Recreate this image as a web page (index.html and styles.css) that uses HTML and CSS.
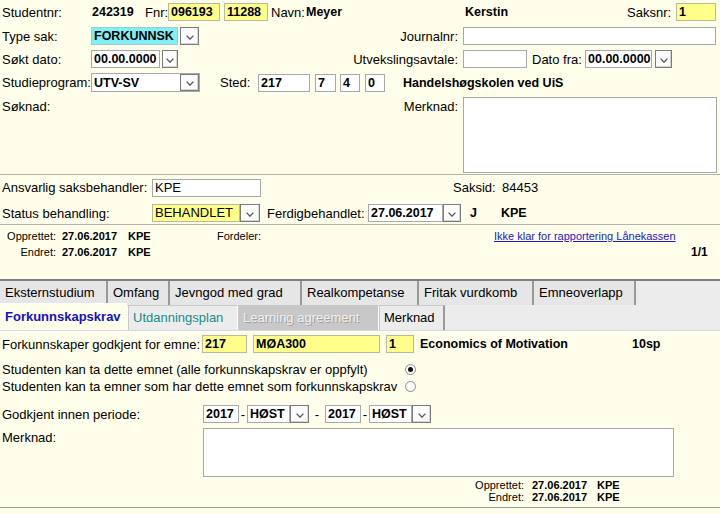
FILE: index.html
```html
<!DOCTYPE html>
<html lang="no">
<head>
<meta charset="utf-8">
<title>Søknad</title>
<link rel="stylesheet" href="styles.css">
</head>
<body>
<div class="page">
  <section class="head">
    <div class="row r1">
      <span class="lbl w92">Studentnr:</span>
      <span class="val w53">242319</span>
      <span class="lbl w23">Fnr:</span>
      <span class="fld yel w52">096193</span>
      <span class="fld yel w44 ml4">11288</span>
      <span class="lbl w35 ml3">Navn:</span>
      <span class="val w159">Meyer</span>
      <span class="val w162">Kerstin</span>
      <span class="lbl w49">Saksnr:</span>
      <span class="fld yel w40">1</span>
    </div>
    <div class="row r2">
      <span class="lbl w91">Type sak:</span>
      <span class="fld cyan w87">FORKUNNSK</span>
      <span class="btn b19 ml2"><svg width="8" height="5" viewBox="0 0 8 5"><polyline points="0.6,0.6 4,4.2 7.4,0.6"/></svg></span>
      <span class="lbl rlbl w264">Journalnr:</span>
      <span class="fld w253"></span>
    </div>
    <div class="row r3">
      <span class="lbl w91">Søkt dato:</span>
      <span class="fld w69">00.00.0000</span>
      <span class="btn b16 ml2"><svg width="8" height="5" viewBox="0 0 8 5"><polyline points="0.6,0.6 4,4.2 7.4,0.6"/></svg></span>
      <span class="lbl rlbl w285">Utvekslingsavtale:</span>
      <span class="fld w64"></span>
      <span class="lbl w53 ml5">Dato fra:</span>
      <span class="fld w67">00.00.0000</span>
      <span class="btn b17 ml3"><svg width="8" height="5" viewBox="0 0 8 5"><polyline points="0.6,0.6 4,4.2 7.4,0.6"/></svg></span>
    </div>
    <div class="row r4">
      <span class="lbl w91">Studieprogram:</span>
      <span class="combo w109">
        <span class="combo-text">UTV-SV</span>
        <span class="btn b19i"><svg width="8" height="5" viewBox="0 0 8 5"><polyline points="0.6,0.6 4,4.2 7.4,0.6"/></svg></span>
      </span>
      <span class="lbl w38 ml20">Sted:</span>
      <span class="fld w52">217</span>
      <span class="fld w21 ml5">7</span>
      <span class="fld w20 ml4">4</span>
      <span class="fld w20 ml5">0</span>
      <span class="val ml18">Handelshøgskolen ved UiS</span>
    </div>
    <div class="row r5">
      <span class="lbl top w403">Søknad:</span>
      <span class="lbl top rlbl w60">Merknad:</span>
      <span class="area w254"></span>
    </div>
  </section>

  <section class="case">
    <div class="row ra">
      <span class="lbl w152">Ansvarlig saksbehandler:</span>
      <span class="fld reg w109">KPE</span>
      <span class="lbl w49 ml192">Saksid:</span>
      <span class="val num">84453</span>
    </div>
    <div class="row rb">
      <span class="lbl w152">Status behandling:</span>
      <span class="fld yel reg w88">BEHANDLET</span>
      <span class="btn b20"><svg width="8" height="5" viewBox="0 0 8 5"><polyline points="0.6,0.6 4,4.2 7.4,0.6"/></svg></span>
      <span class="lbl w101 ml7">Ferdigbehandlet:</span>
      <span class="fld w75">27.06.2017</span>
      <span class="btn b18"><svg width="8" height="5" viewBox="0 0 8 5"><polyline points="0.6,0.6 4,4.2 7.4,0.6"/></svg></span>
      <span class="val w31 ml9">J</span>
      <span class="val">KPE</span>
    </div>
  </section>

  <section class="meta">
    <div class="mrow m1">
      <span class="mlbl w56">Opprettet:</span>
      <span class="mval w66 ml6">27.06.2017</span>
      <span class="mval w89">KPE</span>
      <span class="mtxt w277">Fordeler:</span>
      <a class="link" href="#">Ikke klar for rapportering Lånekassen</a>
    </div>
    <div class="mrow m2">
      <span class="mlbl w56">Endret:</span>
      <span class="mval w66 ml6">27.06.2017</span>
      <span class="mval w89">KPE</span>
      <span class="pager">1/1</span>
    </div>
  </section>

  <nav class="tabs">
    <div class="tabrow t1">
      <span class="tab w106 first">Eksternstudium</span>
      <span class="tab w62">Omfang</span>
      <span class="tab w132">Jevngod med grad</span>
      <span class="tab w117">Realkompetanse</span>
      <span class="tab w115">Fritak vurdkomb</span>
      <span class="tab w104 last">Emneoverlapp</span>
    </div>
    <div class="tabrow t2">
      <span class="tab2 active w127">Forkunnskapskrav</span>
      <span class="tab2 teal w110">Utdanningsplan</span>
      <span class="tab2 disabled w141">Learning agreement</span>
      <span class="tab2 w67 lastb">Merknad</span>
    </div>
  </nav>

  <section class="content">
    <div class="row c1">
      <span class="lbl w202">Forkunnskaper godkjent for emne:</span>
      <span class="fld yel w45">217</span>
      <span class="fld yel w127 ml6">MØA300</span>
      <span class="fld yel w28 ml6">1</span>
      <span class="val w212 ml6">Economics of Motivation</span>
      <span class="val">10sp</span>
    </div>
    <div class="row c2">
      <span class="lbl w405">Studenten kan ta dette emnet (alle forkunnskapskrav er oppfylt)</span>
      <span class="radio checked"></span>
    </div>
    <div class="row c3">
      <span class="lbl w405">Studenten kan ta emner som har dette emnet som forkunnskapskrav</span>
      <span class="radio"></span>
    </div>
    <div class="row c4">
      <span class="lbl w203">Godkjent innen periode:</span>
      <span class="fld w36">2017</span>
      <span class="dash">-</span>
      <span class="fld w43">HØST</span>
      <span class="btn b19"><svg width="8" height="5" viewBox="0 0 8 5"><polyline points="0.6,0.6 4,4.2 7.4,0.6"/></svg></span>
      <span class="dash w16">-</span>
      <span class="fld w36">2017</span>
      <span class="dash">-</span>
      <span class="fld w43">HØST</span>
      <span class="btn b19"><svg width="8" height="5" viewBox="0 0 8 5"><polyline points="0.6,0.6 4,4.2 7.4,0.6"/></svg></span>
    </div>
    <div class="row c5">
      <span class="lbl top w203">Merknad:</span>
      <span class="area w471"></span>
    </div>
    <div class="mrow c6">
      <span class="mlbl w524">Opprettet:</span>
      <span class="mval w65 ml8">27.06.2017</span>
      <span class="mval">KPE</span>
    </div>
    <div class="mrow c7">
      <span class="mlbl w524">Endret:</span>
      <span class="mval w65 ml8">27.06.2017</span>
      <span class="mval">KPE</span>
    </div>
  </section>
</div>
</body>
</html>
```

FILE: styles.css
```css
* { box-sizing: border-box; }
html, body { margin: 0; padding: 0; }
body {
  background: #fffeea;
  font-family: "Liberation Sans", Arial, sans-serif;
  font-size: 13px;
  color: #000;
  width: 720px;
  height: 514px;
  overflow: hidden;
}
.page { width: 720px; }

.row { display: flex; align-items: center; white-space: nowrap; }
.lbl { flex: none; }
.row > .lbl:first-child { padding-left: 2px; }
.lbl.top { align-self: flex-start; padding-top: 2px; }
.rlbl { text-align: right; padding-right: 5px; }
.val { font-weight: bold; font-size: 12.5px; flex: none; }
.num { font-weight: normal; font-size: 13px; }

.fld {
  flex: none;
  height: 18px;
  line-height: 16px;
  border: 1px solid #a9a9a9;
  background: #fff;
  padding-left: 2px;
  font-weight: bold;
  font-size: 12.5px;
  overflow: hidden;
}
.fld.reg { font-weight: normal; font-size: 13px; }
.fld.yel { background: #ffff8a; border-color: #b9b9a0; }
.fld.cyan { background: #80eff6; border-color: #9cc; }

.btn {
  flex: none;
  display: flex;
  align-items: center;
  justify-content: center;
  height: 18px;
  border: 1px solid #7b7b7b;
  background: #fbfbfb;
  box-shadow: inset -1px -1px 0 #d6d6d6;
  padding-top: 2px;
}
.btn svg polyline { fill: none; stroke: #585858; stroke-width: 1.3; }
.b16 { width: 16px; }
.b17 { width: 17px; }
.b18 { width: 18px; }
.b19 { width: 19px; }
.b20 { width: 20px; }

.combo {
  flex: none;
  display: flex;
  align-items: center;
  height: 19px;
  border: 1px solid #a9a9a9;
  background: #fff;
  font-weight: bold;
  font-size: 12.5px;
  padding-left: 2px;
}
.combo-text { flex: 1; }
.b19i {
  width: 19px;
  height: 17px;
  flex: none;
}

.area {
  flex: none;
  border: 1px solid #a9a9a9;
  background: #fff;
}

/* widths */
.w16 { width: 16px; } .w20 { width: 20px; } .w21 { width: 21px; } .w23 { width: 23px; }
.w28 { width: 28px; } .w31 { width: 31px; } .w35 { width: 35px; } .w36 { width: 36px; }
.w38 { width: 38px; } .w40 { width: 40px; } .w43 { width: 43px; } .w44 { width: 44px; }
.w45 { width: 45px; } .w49 { width: 49px; } .w52 { width: 52px; } .w53 { width: 53px; }
.w56 { width: 56px; } .w60 { width: 60px; } .w62 { width: 62px; } .w64 { width: 64px; }
.w65 { width: 65px; } .w66 { width: 66px; } .w67 { width: 67px; } .w69 { width: 69px; }
.w75 { width: 75px; } .w87 { width: 87px; } .w88 { width: 88px; } .w89 { width: 89px; }
.w91 { width: 91px; } .w92 { width: 92px; } .w101 { width: 101px; } .w104 { width: 104px; }
.w106 { width: 106px; } .w109 { width: 109px; } .w110 { width: 110px; } .w115 { width: 115px; }
.w117 { width: 117px; } .w127 { width: 127px; } .w132 { width: 132px; } .w141 { width: 141px; }
.w152 { width: 152px; } .w159 { width: 159px; } .w162 { width: 162px; } .w202 { width: 202px; }
.w203 { width: 203px; } .w212 { width: 212px; } .w253 { width: 253px; } .w254 { width: 254px; }
.w264 { width: 264px; } .w277 { width: 277px; } .w285 { width: 285px; } .w403 { width: 403px; }
.w405 { width: 405px; } .w471 { width: 471px; } .w524 { width: 524px; }
.ml2 { margin-left: 2px; } .ml3 { margin-left: 3px; } .ml4 { margin-left: 4px; }
.ml5 { margin-left: 5px; } .ml6 { margin-left: 6px; } .ml7 { margin-left: 7px; }
.ml8 { margin-left: 8px; } .ml9 { margin-left: 9px; } .ml18 { margin-left: 18px; }
.ml20 { margin-left: 20px; } .ml192 { margin-left: 192px; }

/* head */
.head { padding-top: 3px; border-bottom: 1px solid #b3b3a8; height: 175px; }
.r1 { height: 18px; }
.r2 { height: 18px; margin-top: 6px; }
.r3 { height: 18px; margin-top: 5px; }
.r4 { height: 19px; margin-top: 5px; }
.r5 { height: 76px; margin-top: 5px; align-items: flex-start; }
.r5 .area { height: 76px; }

/* case */
.case { height: 50px; border-bottom: 1px solid #b3b3a8; padding-top: 3px; }
.ra { height: 19px; }
.rb { height: 18px; margin-top: 7px; }

/* meta */
.meta { height: 54px; padding-top: 4px; }
.mrow { display: flex; align-items: center; height: 14px; font-size: 11px; white-space: nowrap; }
.m2 { margin-top: 2px; }
.mlbl { text-align: right; flex: none; }
.mval { font-weight: bold; flex: none; }
.mtxt { flex: none; }
.link { color: #1a1ac8; text-decoration: underline; }
.pager { margin-left: 474px; font-weight: bold; font-size: 12px; }

/* tabs */
.tabs {
  border-top: 2px solid #7f7f7f;
  background: #ececec;
  height: 52px;
  border-bottom: 1px solid #d9d9d9;
  box-shadow: 0 1px 0 #fff;
}
.tabrow { display: flex; white-space: nowrap; }
.t1 { height: 24px; }
.t2 { height: 25px; }
.tab {
  flex: none;
  height: 24px;
  line-height: 23px;
  padding-left: 5px;
  border-left: 2px solid #999;
  background: #e6e6e6;
}
.tab.first { border-left: none; }
.tab.last { border-right: 2px solid #999; }
.tab2 {
  flex: none;
  height: 25px;
  line-height: 24px;
  padding-left: 5px;
  border-top: 1px solid #c8c8c8;
  border-left: 1px solid #fff;
  box-shadow: inset 1px 0 0 #c9c9c9;
}
.tab2.active {
  background: #fffeea;
  color: #1111c6;
  font-weight: bold;
  border-left: none;
  border-top: 1px solid #fff;
  box-shadow: none;
  height: 27px;
  margin-top: -2px;
  line-height: 26px;
}
.tab2.teal { color: #178d8d; }
.tab2.disabled {
  background: #c8c8c8;
  color: #f0f0f0;
  text-shadow: 1px 1px 0 #a0a0a0;
}
.tab2.lastb { border-right: 2px solid #999; }

/* content */
.content { padding-top: 4px; }
.c1 { height: 18px; }
.c2 { height: 16px; margin-top: 8px; }
.c3 { height: 16px; margin-top: 1px; }
.c4 { height: 18px; margin-top: 11px; }
.c5 { height: 49px; margin-top: 5px; align-items: flex-start; }
.c5 .area { height: 49px; }
.c6 { margin-top: 1px; height: 13px; }
.c7 { border-bottom: 1px solid #999; height: 17px; align-items: flex-start; }
.dash { flex: none; width: 8px; text-align: center; }
.dash.w16 { width: 16px; }

.radio {
  flex: none;
  width: 11px;
  height: 11px;
  border: 1px solid #8a8a8a;
  border-radius: 50%;
  background: #fff;
  position: relative;
}
.radio.checked::after {
  content: "";
  position: absolute;
  left: 2px;
  top: 2px;
  width: 5px;
  height: 5px;
  border-radius: 50%;
  background: #111;
}
```
